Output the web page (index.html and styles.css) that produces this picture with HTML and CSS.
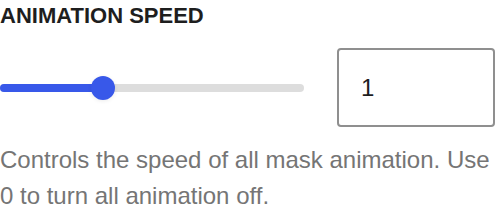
FILE: index.html
```html
<!DOCTYPE html>
<html lang="en">
<head>
    <meta charset="UTF-8">
    <meta name="viewport" content="width=device-width, initial-scale=1.0">
    <title>Animation speed</title>
    <link rel="stylesheet" href="styles.css">
</head>
<body>
    <div class="control">
        <label class="control-label" for="speed">Animation speed</label>

        <div class="control-row">
            <!-- slider -->
            <div class="range">
                <div class="range-track"></div>
                <div class="range-fill" style="width: 103px;"></div>
                <div class="range-thumb" style="left: 103px;"></div>
            </div>
            <input class="number-input" id="speed" type="number" value="1">
        </div>

        <p class="control-help">Controls the speed of all mask animation. Use 0 to turn all animation off.</p>
    </div>
</body>
</html>
```

FILE: styles.css
```css
html, body {
    margin: 0;
    padding: 0;
    background-color: #ffffff;
}

body {
    font-family: "Liberation Sans", Arial, sans-serif;
    color: #1e1e1e;
}

.control {
    width: 496px;
}

.control-label {
    display: block;
    font-size: 22px;
    font-weight: bold;
    text-transform: uppercase;
    line-height: 32px;
    margin: 0 0 16px 0;
}

.control-row {
    display: flex;
    align-items: center;
    gap: 33px;
}

.range {
    position: relative;
    width: 304px;
    height: 24px;
    flex: 0 0 304px;
}

.range-track {
    position: absolute;
    left: 0;
    right: 0;
    top: 8px;
    height: 8px;
    border-radius: 4px;
    background-color: #dddddd;
}

.range-fill {
    position: absolute;
    left: 0;
    top: 8px;
    height: 8px;
    border-radius: 4px;
    background-color: #3858e9;
}

.range-thumb {
    position: absolute;
    top: 0;
    width: 24px;
    height: 24px;
    margin-left: -12px;
    border-radius: 50%;
    background-color: #3858e9;
    box-shadow: 0 1px 4px rgba(0, 0, 0, 0.08);
}

.number-input {
    box-sizing: border-box;
    width: 158px;
    height: 79px;
    margin: 0;
    padding: 0 0 0 22px;
    border: 2px solid #8f8f8f;
    border-radius: 4px;
    font-family: "Liberation Sans", Arial, sans-serif;
    font-size: 24px;
    color: #1e1e1e;
    outline: none;
    -moz-appearance: textfield;
}

.number-input::-webkit-outer-spin-button,
.number-input::-webkit-inner-spin-button {
    -webkit-appearance: none;
    margin: 0;
}

.control-help {
    margin: 15px 0 0 0;
    font-size: 24px;
    line-height: 36px;
    color: #757575;
}
```
